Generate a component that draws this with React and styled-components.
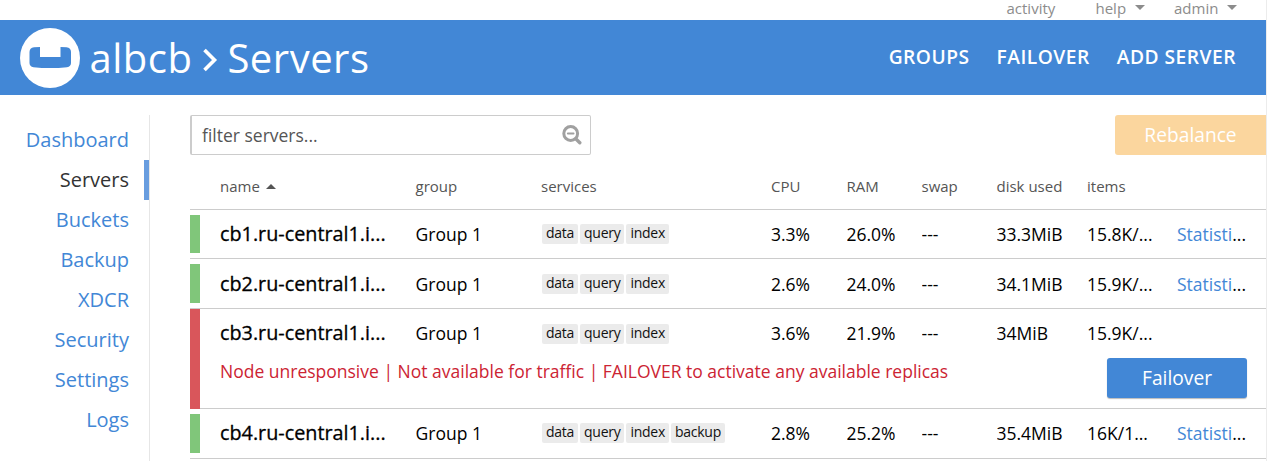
import React from "react";
import styled, { createGlobalStyle } from "styled-components";

const Global = createGlobalStyle`
  * { box-sizing: border-box; }
  body { margin: 0; background: #fff; color: #000; font-family: "Open Sans", "Noto Sans", sans-serif; font-size: 17.5px; overflow: hidden; }
  #root { height: 461px; }
`;
const Page = styled.div`
  width: 1267px; height: 461px; overflow: hidden; border-right: 1px solid #ececec;
`;
const TopBar = styled.nav`
  height: 20px; display: flex; justify-content: flex-end; padding-right: 29px; color: #8c8c8c;
  font-size: 15px; line-height: 17px; font-weight: 400;
`;
const TopItem = styled.span`
  display: flex; width: ${(p) => p.$w}px;
`;
const Caret = styled.span`
  border: 5px solid transparent; border-${(p) => (p.$up ? "bottom" : "top")}-color: ${(p) => p.$color};
  border-${(p) => (p.$up ? "top" : "bottom")}-width: 0; align-self: ${(p) => (p.$up ? "center" : "flex-start")};
  margin: ${(p) => p.$m}; height: 0;
`;
const Header = styled.header`
  height: 75px; background: #4287d6; color: #fff; display: flex; align-items: center; padding: 0 30px 0 20px;
`;
const Title = styled.h1`
  display: flex; align-items: center; margin: 0 auto 0 9.5px; font-size: 40px; line-height: 60px; font-weight: 400;
  letter-spacing: 0.5px;
  svg { margin: 4px 9px 0 10px; }
`;
const HeaderLink = styled.a`
  font-size: 19.2px; font-weight: 600; margin: -2px 0 0 27px; letter-spacing: 0.5px;
`;
const Body = styled.div`
  display: flex; padding-top: 20px;
`;
const Side = styled.aside`
  width: 150px; height: 346px; border-right: 1px solid #e6e6e6; padding-top: 5px; flex: none;
`;
const SideLink = styled.a`
  display: block; height: 40px; line-height: 40px; text-align: right; font-size: 20px;
  padding-right: ${(p) => (p.$current ? 15 : 20)}px; color: ${(p) => (p.$current ? "#333" : "#4287d6")};
  border-right: ${(p) => (p.$current ? "5px solid #689ddf" : "0")};
`;
const Main = styled.main`
  width: 1076px; margin-left: 40px; flex: none;
`;
const Tools = styled.div`
  display: flex; justify-content: space-between; height: 40px;
`;
const Filter = styled.div`
  width: 401px; border: 1px solid #ccc; border-left-width: 2px; border-radius: 2px; display: flex; align-items: center;
  justify-content: space-between; padding: 0 8px 0 10px; color: #555; font-size: 17.5px;
`;
const Button = styled.button`
  font: inherit; font-size: 19.2px; line-height: 40px; height: 40px; border: 0; padding: 0; color: #fff;
  width: ${(p) => p.$w}px; background: ${(p) => p.$bg}; flex: none;
  border-radius: ${(p) => (p.$flush ? "3px 0 0 3px" : "3px")};
  box-shadow: ${(p) => (p.$flush ? "none" : "0 1px 1px #bbb")};
`;
const Columns = styled.div`
  display: grid; grid-template-columns: 195.5px 125.5px 230px 75.5px 75px 75px 90.5px 90px 70px;
`;
const HeadRow = styled(Columns)`
  height: 55px; padding-left: 30px; border-bottom: 1px solid #ccc; font-size: 15px; line-height: 62px; color: #555;
`;
const Row = styled.section`
  height: ${(p) => p.$h}px; border-bottom: 1px solid #ccc; display: flex;
`;
const Status = styled.div`
  width: 10px; flex: none; background: ${(p) => (p.$bad ? "#d9565b" : "#80c67a")};
  margin: ${(p) => (p.$bad ? "0 0 -1px" : "5px 0")};
`;
const RowBody = styled.div`
  flex: 1; padding-left: 20px;
`;
const Cells = styled(Columns)`
  line-height: 48px; height: 49px; padding-top: ${(p) => p.$top}px;
`;
const Cell = styled.span`
  overflow: hidden; white-space: nowrap; text-overflow: ellipsis;
`;
const Name = styled(Cell)`
  font-size: 19.8px; font-weight: 500; width: 175px; -webkit-text-stroke: 0.3px #000;
`;
const Tags = styled.span`
  display: flex; gap: 2px; padding: ${(p) => p.$top}px 0 0 1px;
`;
const Tag = styled.span`
  height: 20px; line-height: 18px; background: #ebebeb; border-radius: 2px; padding: 0 4px; font-size: 14px;
  letter-spacing: -0.27px; color: #111;
`;
const Link = styled.a`
  color: #4287d6;
`;
const Warning = styled.div`
  display: flex; justify-content: space-between; padding-right: 19px; color: #cc2433; line-height: 26px;
`;

const NAV = ["Dashboard", "Servers", "Buckets", "Backup", "XDCR", "Security", "Settings", "Logs"];
const HEADS = ["group", "services", "CPU", "RAM", "swap", "disk used", "items"];
const SVC = ["data", "query", "index"];
const SERVERS = [
  { name: "cb1", h: 49, top: 0, tagTop: 14, cpu: "3.3%", ram: "26.0%", disk: "33.3MiB", items: "15.8K/...", services: SVC },
  { name: "cb2", h: 50, top: 1, tagTop: 14, cpu: "2.6%", ram: "24.0%", disk: "34.1MiB", items: "15.9K/...", services: SVC },
  { name: "cb3", h: 100, top: 0, tagTop: 15, cpu: "3.6%", ram: "21.9%", disk: "34MiB", items: "15.9K/...", services: SVC, down: true },
  { name: "cb4", h: 50, top: 0, tagTop: 14, cpu: "2.8%", ram: "25.2%", disk: "35.4MiB", items: "16K/1...", services: [...SVC, "backup"] },
];

function Server({ s }) {
  return (
    <Row $h={s.h}>
      <Status $bad={s.down} />
      <RowBody>
        <Cells $top={s.top}>
          <Name>{s.name}.ru-central1.i...</Name>
          <Cell>Group 1</Cell>
          <Tags $top={s.tagTop}>{s.services.map((t) => <Tag key={t}>{t}</Tag>)}</Tags>
          <Cell>{s.cpu}</Cell>
          <Cell>{s.ram}</Cell>
          <Cell>---</Cell>
          <Cell>{s.disk}</Cell>
          <Cell>{s.items}</Cell>
          {!s.down && <Cell><Link>Statisti</Link>...</Cell>}
        </Cells>
        {s.down && (
          <Warning>
            Node unresponsive | Not available for traffic | FAILOVER to activate any available replicas
            <Button $w={140} $bg="#4287d6">Failover</Button>
          </Warning>
        )}
      </RowBody>
    </Row>
  );
}

export default function App() {
  return (
    <Page>
      <Global />
      <TopBar>
        <TopItem $w={89}>activity</TopItem>
        <TopItem $w={78.5}>help<Caret $color="#8c8c8c" $m="5px 0 0 9px" /></TopItem>
        <TopItem $w={63}>admin<Caret $color="#8c8c8c" $m="5px 0 0 9px" /></TopItem>
      </TopBar>
      <Header>
        <svg width="60" height="60" viewBox="0 0 60 60">
          <circle cx="30" cy="30" r="30" fill="#fff" />
          <path d="M14 19.3L20 19V29H40.500V19L46.500 19.300Q51 20 51 24V35Q51 38.500 47 39.200Q30 41 13.500 39.200Q9.500 38.500 9.500 35V24Q9.500 20 14 19.300Z" fill="#4287d6" />
        </svg>
        <Title>
          albcb
          <svg width="16" height="24" viewBox="0 0 16 24" fill="none" stroke="#fff" strokeWidth="3.600"><path d="M2.500 2L12.500 12L2.500 22" /></svg>
          Servers
        </Title>
        <HeaderLink>GROUPS</HeaderLink>
        <HeaderLink>FAILOVER</HeaderLink>
        <HeaderLink>ADD SERVER</HeaderLink>
      </Header>
      <Body>
        <Side>{NAV.map((n) => <SideLink key={n} $current={n === "Servers"}>{n}</SideLink>)}</Side>
        <Main>
          <Tools>
            <Filter>
              filter servers...
              <svg width="20" height="20" viewBox="0 0 20 20" fill="none" stroke="#a0a0a0" strokeLinecap="round">
                <circle cx="8.700" cy="8.500" r="6.900" strokeWidth="3" />
                <path d="M14 14L17.800 17.800" strokeWidth="3.400" />
                <path d="M5.800 8.500H11.600" strokeWidth="1.800" />
              </svg>
            </Filter>
            <Button $w={151} $bg="#fbd69e" $flush>Rebalance</Button>
          </Tools>
          <HeadRow>
            <TopItem>name<Caret $up $color="#555" $m="0 0 0 6px" /></TopItem>
            {HEADS.map((h) => <span key={h}>{h}</span>)}
          </HeadRow>
          {SERVERS.map((s) => <Server key={s.name} s={s} />)}
        </Main>
      </Body>
    </Page>
  );
}
